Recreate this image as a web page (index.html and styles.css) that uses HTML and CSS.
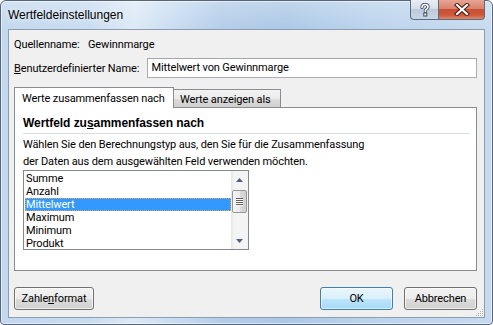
FILE: index.html
```html
<!DOCTYPE html>
<html lang="de">
<head>
<meta charset="utf-8">
<title>Wertfeldeinstellungen</title>
<link rel="stylesheet" href="styles.css">
</head>
<body>
<div class="window">
  <div class="titlebar">
    <div class="title">Wertfeldeinstellungen</div>
    <div class="caption-btns">
      <div class="cbtn help">
        <svg width="14" height="14" viewBox="0 0 14 14">
          <path d="M4 4.5 C4 2.5 5.5 1.5 7 1.5 C8.8 1.5 10 2.6 10 4 C10 5.6 8.2 6 7.4 7.2 L7.4 8.6" fill="none" stroke="#3b4a5a" stroke-width="3.2" stroke-linecap="round"/>
          <path d="M4 4.5 C4 2.5 5.5 1.5 7 1.5 C8.8 1.5 10 2.6 10 4 C10 5.6 8.2 6 7.4 7.2 L7.4 8.6" fill="none" stroke="#ffffff" stroke-width="1.6" stroke-linecap="round"/>
          <rect x="5.8" y="10" width="3" height="3" fill="#fff" stroke="#3b4a5a" stroke-width="1"/>
        </svg>
      </div>
      <div class="cbtn close">
        <svg width="16" height="13" viewBox="0 0 16 13">
          <path d="M3 2 L13 11 M13 2 L3 11" stroke="#4a1810" stroke-width="4.2" stroke-linecap="square"/>
          <path d="M3 2 L13 11 M13 2 L3 11" stroke="#ffffff" stroke-width="2.2" stroke-linecap="square"/>
        </svg>
      </div>
    </div>
  </div>
  <div class="client">
    <div class="row-src"><span class="src-label">Quellenname:</span><span>Gewinnmarge</span></div>
    <div class="row-name">
      <span class="name-label"><u>B</u>enutzerdefinierter Name:</span>
      <div class="textbox">Mittelwert von Gewinnmarge</div>
    </div>
    <div class="tabs">
      <div class="tab active">Werte zusammenfassen nach</div>
      <div class="tab inactive">Werte anzeigen als</div>
    </div>
    <div class="panel">
      <div class="heading">Wertfeld zu<u>s</u>ammenfassen nach</div>
      <div class="sep"></div>
      <p class="desc">Wählen Sie den Berechnungstyp aus, den Sie für die Zusammenfassung<br>der Daten aus dem ausgewählten Feld verwenden möchten.</p>
      <div class="listbox">
        <div class="items">
          <div class="item">Summe</div>
          <div class="item">Anzahl</div>
          <div class="item selected">Mittelwert</div>
          <div class="item">Maximum</div>
          <div class="item">Minimum</div>
          <div class="item">Produkt</div>
        </div>
        <div class="scrollbar">
          <div class="sb-arrow">
            <svg width="7" height="4" viewBox="0 0 7 4"><path d="M0 4 L3.5 0 L7 4 Z" fill="#4d6185"/></svg>
          </div>
          <div class="sb-track">
            <div class="sb-thumb">
              <span class="grip-line"></span><span class="grip-line"></span><span class="grip-line"></span><span class="grip-line"></span>
            </div>
          </div>
          <div class="sb-arrow">
            <svg width="7" height="4" viewBox="0 0 7 4"><path d="M0 0 L7 0 L3.5 4 Z" fill="#4d6185"/></svg>
          </div>
        </div>
      </div>
    </div>
    <div class="buttons">
      <div class="btn btn-format">Zahle<u>n</u>format</div>
      <div class="btn btn-default">OK</div>
      <div class="btn">Abbrechen</div>
    </div>
    <svg class="size-grip" width="9" height="9" viewBox="0 0 9 9">
      <g fill="#a9b6c3">
        <rect x="7" y="1" width="1" height="1"/>
        <rect x="5" y="3" width="1" height="1"/><rect x="7" y="3" width="1" height="1"/>
        <rect x="3" y="5" width="1" height="1"/><rect x="5" y="5" width="1" height="1"/><rect x="7" y="5" width="1" height="1"/>
        <rect x="1" y="7" width="1" height="1"/><rect x="3" y="7" width="1" height="1"/><rect x="5" y="7" width="1" height="1"/><rect x="7" y="7" width="1" height="1"/>
      </g>
    </svg>
  </div>
</div>
</body>
</html>
```

FILE: styles.css
```css
* { box-sizing: border-box; }

html, body {
  margin: 0;
  padding: 0;
  width: 493px;
  height: 325px;
  overflow: hidden;
  background: #ffffff;
}

body {
  font-family: Roboto, "Liberation Sans", Arial, sans-serif;
  font-size: 11px;
  letter-spacing: -0.12px;
  color: #000;
}

.window {
  width: 493px;
  height: 325px;
  border: 1px solid #56657a;
  border-radius: 6px 6px 4px 4px;
  background:
    linear-gradient(180deg, rgba(255,255,255,0.25) 0%, rgba(255,255,255,0) 30px),
    linear-gradient(90deg, #c2d8ee 0%, #c8dcf1 18%, #dde9f6 27%, #cde0f3 33%, #b3cde8 45%, #abc8e6 58%, #bad3ec 75%, #c6daef 100%);
  box-shadow: inset 0 0 0 1px rgba(255,255,255,0.55);
  display: flex;
  flex-direction: column;
}

.titlebar {
  height: 28px;
  display: flex;
  align-items: center;
  padding-left: 7px;
}

.title {
  flex: 1;
  font-family: "Liberation Sans", Arial, sans-serif;
  font-size: 12px;
  letter-spacing: 0;
  color: #000;
  text-shadow: 0 0 6px rgba(255,255,255,0.9);
}

.caption-btns {
  align-self: flex-start;
  display: flex;
  margin-right: 7px;
  margin-top: -1px;
}

.cbtn {
  height: 20px;
  display: flex;
  align-items: center;
  justify-content: center;
  border: 1px solid #5b6b80;
  border-top: none;
}

.cbtn.help {
  width: 28px;
  border-radius: 0 0 0 4px;
  border-right: none;
  background: linear-gradient(180deg, #e8eef5 0%, #d5dfea 45%, #bccadb 50%, #c8d6e6 100%);
}

.cbtn.close {
  width: 47px;
  border-radius: 0 0 4px 0;
  background: linear-gradient(180deg, #e8a494 0%, #d9826d 45%, #c74f35 50%, #d0583c 80%, #e08a6a 100%);
}

.client {
  flex: 1;
  position: relative;
  margin: 0 7px 6px 7px;
  border: 1px solid #8d9db0;
  background: #f0f0f0;
  padding: 0 7px 0 5px;
  display: flex;
  flex-direction: column;
}

.row-src {
  margin-top: 7px;
  height: 15px;
  line-height: 15px;
  display: flex;
}

.src-label {
  width: 74px;
}

.row-name {
  margin-top: 6px;
  height: 20px;
  display: flex;
  align-items: center;
}

.name-label {
  width: 134px;
}

.textbox {
  width: 331px;
  height: 20px;
  line-height: 18px;
  border: 1px solid #abadb3;
  border-top-color: #a3a6ad;
  background: #fff;
  padding-left: 3px;
}

.tabs {
  margin-top: 9px;
  height: 20px;
  display: flex;
  align-items: flex-start;
}

.tab {
  border: 1px solid #898c95;
  border-bottom: none;
  white-space: nowrap;
}

.tab.active {
  position: relative;
  z-index: 1;
  width: 160px;
  height: 21px;
  background: #fff;
  padding: 3px 0 0 7px;
  line-height: 15px;
}

.tab.inactive {
  margin-top: 2px;
  margin-left: -1px;
  width: 108px;
  height: 18px;
  padding: 2px 0 0 6px;
  line-height: 15px;
  background: linear-gradient(180deg, #f2f2f2 0%, #ebebeb 50%, #dddddd 51%, #cfcfcf 100%);
}

.panel {
  height: 164px;
  border: 1px solid #898c95;
  background: #fff;
  padding: 8px 6px 0 8px;
}

.heading {
  font-family: "Liberation Sans", Arial, sans-serif;
  font-size: 12px;
  letter-spacing: -0.05px;
  font-weight: bold;
  line-height: 15px;
  height: 15px;
}

.sep {
  margin-top: 2px;
  height: 1px;
  background: #d5dfe5;
}

.desc {
  margin: 2px 0 0 0;
  line-height: 17px;
}

.listbox {
  width: 226px;
  height: 80px;
  border: 1px solid #828790;
  display: flex;
  overflow: hidden;
}

.items {
  flex: 1;
  padding: 1px 0 0 1px;
  overflow: hidden;
}

.item {
  height: 13px;
  line-height: 13px;
  padding-left: 1px;
  white-space: nowrap;
}

.item.selected {
  background: #3399ff;
  color: #fff;
  outline: 1px dotted #e0a05a;
  outline-offset: -1px;
}

.scrollbar {
  width: 17px;
  display: flex;
  flex-direction: column;
  background: linear-gradient(90deg, #e6e6e6 0%, #f4f4f4 20%, #f4f4f4 100%);
}

.sb-arrow {
  height: 17px;
  display: flex;
  align-items: center;
  justify-content: center;
}

.sb-track {
  flex: 1;
  padding-top: 2px;
  display: flex;
  justify-content: center;
}

.sb-thumb {
  width: 15px;
  height: 23px;
  border: 1px solid #979797;
  border-radius: 2px;
  background: linear-gradient(90deg, #f3f3f3 0%, #ebebeb 50%, #dbdbdb 51%, #d0d0d0 100%);
  display: flex;
  flex-direction: column;
  align-items: center;
  justify-content: center;
  gap: 1px;
}

.grip-line {
  display: block;
  width: 7px;
  height: 1px;
  background: #5f5f5f;
  box-shadow: 0 1px 0 #fdfdfd;
}

.buttons {
  margin-top: 16px;
  display: flex;
  gap: 11px;
}

.btn {
  width: 73px;
  height: 23px;
  border: 1px solid #707070;
  border-radius: 3px;
  background: linear-gradient(180deg, #f2f2f2 0%, #ebebeb 50%, #dddddd 51%, #cfcfcf 100%);
  box-shadow: inset 0 0 0 1px rgba(255,255,255,0.7);
  display: flex;
  align-items: center;
  justify-content: center;
  line-height: 15px;
}

.btn-format {
  width: 80px;
  margin-right: auto;
}

.btn-default {
  border-color: #3c7fb1;
  background: linear-gradient(180deg, #eaf6fd 0%, #d9f0fc 50%, #bee6fd 51%, #a7d9f5 100%);
  box-shadow: inset 0 0 0 1px rgba(255,255,255,0.6);
}

.size-grip {
  position: absolute;
  right: 0;
  bottom: 0;
}
```
